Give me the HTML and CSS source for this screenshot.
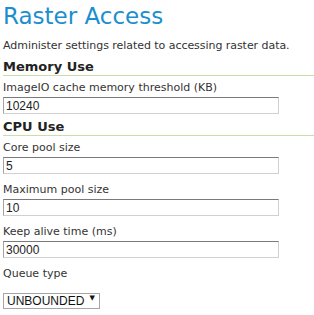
FILE: index.html
```html
<!DOCTYPE html>
<html lang="en">

<head>
    <meta charset="UTF-8">
    <title>Raster Access</title>
    <link rel="stylesheet" href="styles.css">
</head>

<body>
    <h1 class="page-title">Raster Access</h1>
    <p class="page-desc">Administer settings related to accessing raster data.</p>

    <h3 class="section">Memory Use</h3>
    <div class="field">
        <label for="cache">ImageIO cache memory threshold (KB)</label>
        <input type="text" id="cache" value="10240">
    </div>

    <h3 class="section">CPU Use</h3>
    <div class="field">
        <label for="core">Core pool size</label>
        <input type="text" id="core" value="5">
    </div>
    <div class="field">
        <label for="max">Maximum pool size</label>
        <input type="text" id="max" value="10">
    </div>
    <div class="field">
        <label for="alive">Keep alive time (ms)</label>
        <input type="text" id="alive" value="30000">
    </div>
    <div class="field">
        <label for="queue">Queue type</label>
        <span class="select-wrap">
            <select id="queue">
                <option>UNBOUNDED</option>
                <option>DIRECT</option>
            </select>
        </span>
    </div>
</body>

</html>
```

FILE: styles.css
```css
body {
    margin: 0;
    padding: 0 0 0 3px;
    font-family: "DejaVu Sans", Verdana, sans-serif;
    color: #333;
    background: #fff;
}

.page-title {
    margin: 2px 0 0;
    font-size: 23px;
    line-height: 28px;
    font-weight: normal;
    color: #1b8fcd;
}

.page-desc {
    margin: 9px 0 0;
    font-size: 11px;
    line-height: 13px;
    letter-spacing: -0.05px;
}

/* section headers with the green rule */
.section {
    margin: 7px 0 0;
    padding-bottom: 1px;
    font-size: 13px;
    line-height: 15px;
    font-weight: bold;
    color: #222;
    border-bottom: 1px solid #cbdda8;
}

.field + .section {
    margin-top: 5px;
}

.section + .field {
    margin-top: 5px;
}

.field + .field {
    margin-top: 9px;
}

.field label {
    display: block;
    font-size: 11px;
    line-height: 13px;
}

.field input {
    display: block;
    box-sizing: border-box;
    width: 276px;
    height: 17px;
    margin: 3px 0 0;
    padding: 0 2px;
    font-family: "Liberation Sans", Arial, sans-serif;
    font-size: 12px;
    color: #222;
    border: 1px solid #d0d0d0;
    border-top-color: #7a7a7a;
    border-left-color: #a4a4a4;
    outline: none;
}

.select-wrap {
    position: relative;
    display: inline-block;
    margin-top: 10px;
}

.select-wrap select {
    appearance: none;
    -webkit-appearance: none;
    box-sizing: border-box;
    width: 97px;
    height: 16px;
    padding: 0 0 0 3px;
    font-family: "Liberation Sans", Arial, sans-serif;
    font-size: 12px;
    line-height: 14px;
    color: #111;
    background: #fff;
    border: 1px solid #a6a6a6;
    border-radius: 0;
}

/* little arrow over the select */
.select-wrap::after {
    content: "▼";
    position: absolute;
    right: 5px;
    top: 3px;
    font-size: 7px;
    line-height: 10px;
    color: #111;
    pointer-events: none;
}
```
